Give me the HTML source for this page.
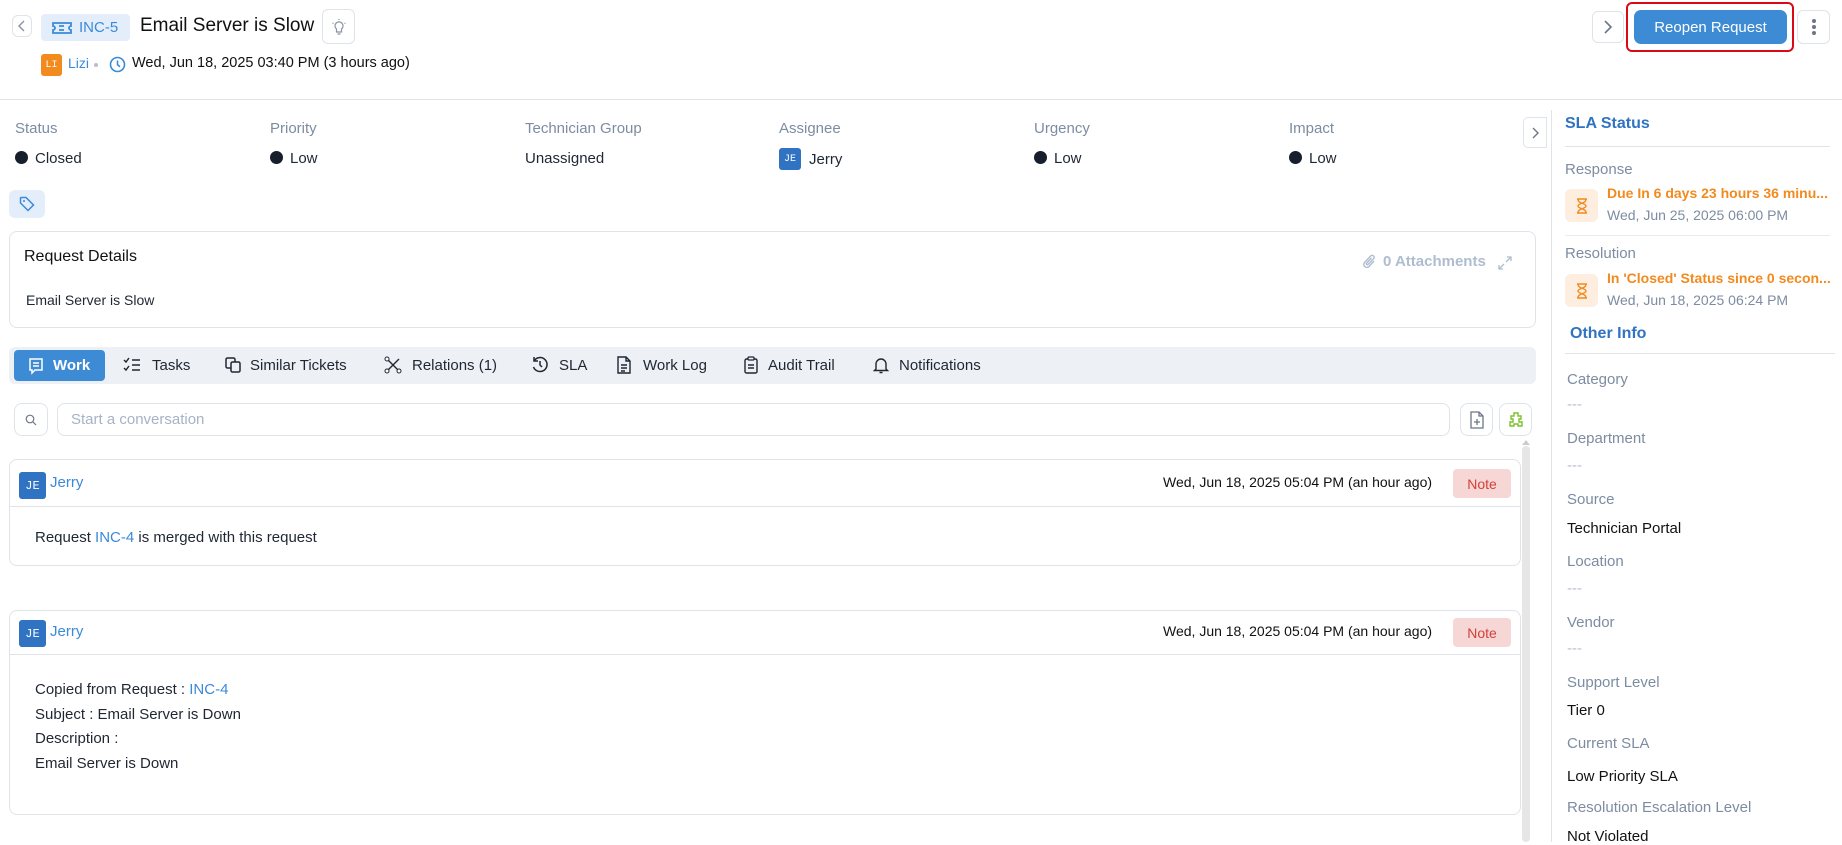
<!DOCTYPE html>
<html><head><meta charset="utf-8"><style>
*{box-sizing:border-box;margin:0;padding:0}
body{width:1842px;height:842px;overflow:hidden;background:#fff;font-family:"Liberation Sans",sans-serif;color:#1f2733;font-size:15px;position:relative}
.a{position:absolute}
.lbl{color:#7d8ca1;font-size:15px}
.btn{position:absolute;border:1px solid #dfe4ea;border-radius:6px;background:#fff;display:flex;align-items:center;justify-content:center}
.dot{display:inline-block;width:13px;height:13px;border-radius:50%;background:#161f2b;vertical-align:-1px;margin-right:7px}
.blue{color:#3b8ad9}
.card{position:absolute;border:1px solid #dfe4ea;border-radius:8px;background:#fff}
.av{display:inline-flex;align-items:center;justify-content:center;color:#fff;font-size:10px;border-radius:3px;font-family:"Liberation Mono",monospace}
.tab{position:absolute;top:357px;font-size:15px;color:#1f2733}
.note{position:absolute;left:1444px;width:58px;height:29px;background:#f6d7d5;color:#d2413a;border-radius:4px;font-size:14px;display:flex;align-items:center;justify-content:center}
.ri{position:absolute;left:1567px;font-size:15px}
</style></head><body>

<div class="btn" style="left:12px;top:15px;width:20px;height:22px"><svg width="10" height="12" viewBox="0 0 10 12"><path d="M7 1L2 6l5 5" stroke="#8793a3" fill="none" stroke-width="1.4"/></svg></div>
<div class="a" style="left:41px;top:14px;width:89px;height:27px;background:#e4eefa;border-radius:4px;color:#3b8ad9;font-size:15px;display:flex;align-items:center;padding-left:10px">
<svg width="22" height="14" viewBox="0 0 22 14" style="margin-right:6px"><path d="M2 2h18v3a2 2 0 000 4v3H2V9a2 2 0 000-4z M8 5h5M8 9h5" stroke="#3b8ad9" fill="none" stroke-width="1.8"/></svg>INC-5</div>
<div class="a" style="left:140px;top:15px;font-size:19px;color:#111">Email Server is Slow</div>
<div class="btn" style="left:322px;top:9px;width:33px;height:35px"><svg width="16" height="18" viewBox="0 0 16 18"><path d="M5.5 11a4 4 0 115 0v3h-5z M6.5 16h3 M8 1v1 M1.5 5l1 .5 M14.5 5l-1 .5" stroke="#8793a3" fill="none" stroke-width="1.2"/></svg></div>
<div class="av a" style="left:41px;top:54px;width:21px;height:22px;background:#f28a1e">LI</div>
<div class="a blue" style="left:68px;top:55px;font-size:14px">Lizi</div>
<div class="a" style="left:94px;top:63px;width:4px;height:4px;border-radius:50%;background:#b7c0cc"></div>
<svg class="a" style="left:109px;top:56px" width="17" height="17" viewBox="0 0 17 17"><circle cx="8.5" cy="8.5" r="7" stroke="#3b8ad9" fill="none" stroke-width="1.6"/><path d="M8.5 4.5v4.3l2.5 2" stroke="#3b8ad9" fill="none" stroke-width="1.6"/></svg>
<div class="a" style="left:132px;top:55px;font-size:14.5px;color:#111">Wed, Jun 18, 2025 03:40 PM (3 hours ago)</div>

<div class="btn" style="left:1592px;top:11px;width:32px;height:32px"><svg width="10" height="14" viewBox="0 0 10 14"><path d="M2 1l6 6-6 6" stroke="#6c7686" fill="none" stroke-width="1.6"/></svg></div>
<div class="a" style="left:1626px;top:2px;width:168px;height:50px;border:2.5px solid #d90a16;border-radius:6px"></div>
<div class="a" style="left:1634px;top:10px;width:153px;height:34px;background:#3d8ad5;border-radius:7px;color:#fff;font-size:15px;display:flex;align-items:center;justify-content:center">Reopen Request</div>
<div class="btn" style="left:1797px;top:10px;width:33px;height:34px"><svg width="4" height="18" viewBox="0 0 4 18"><circle cx="2" cy="3" r="2" fill="#6c7686"/><circle cx="2" cy="9" r="2" fill="#6c7686"/><circle cx="2" cy="15" r="2" fill="#6c7686"/></svg></div>
<div class="a" style="left:0;top:99px;width:1842px;height:1px;background:#e0e4ea"></div>

<div class="a lbl" style="left:15px;top:120px">Status</div><div class="a" style="left:15px;top:150px"><span class="dot"></span>Closed</div>
<div class="a lbl" style="left:270px;top:120px">Priority</div><div class="a" style="left:270px;top:150px"><span class="dot"></span>Low</div>
<div class="a lbl" style="left:525px;top:120px">Technician Group</div><div class="a" style="left:525px;top:150px">Unassigned</div>
<div class="a lbl" style="left:779px;top:120px">Assignee</div><div class="a" style="left:779px;top:148px;display:flex;align-items:center"><span class="av" style="width:22px;height:22px;background:#2f73c2;margin-right:8px">JE</span>Jerry</div>
<div class="a lbl" style="left:1034px;top:120px">Urgency</div><div class="a" style="left:1034px;top:150px"><span class="dot"></span>Low</div>
<div class="a lbl" style="left:1289px;top:120px">Impact</div><div class="a" style="left:1289px;top:150px"><span class="dot"></span>Low</div>
<div class="btn" style="left:1523px;top:117px;width:24px;height:31px;border-radius:5px 0 0 5px"><svg width="8" height="12" viewBox="0 0 8 12"><path d="M2 1l5 5-5 5" stroke="#6c7686" fill="none" stroke-width="1.4"/></svg></div>
<div class="a" style="left:9px;top:190px;width:36px;height:28px;background:#e4eefa;border-radius:6px;display:flex;align-items:center;justify-content:center"><svg width="16" height="16" viewBox="0 0 16 16"><path d="M1.5 2v5l7.5 7.5 5.5-5.5L7 1.5H2z" stroke="#3b8ad9" fill="none" stroke-width="1.5"/><circle cx="5" cy="5" r="1" fill="#3b8ad9"/></svg></div>

<div class="card" style="left:9px;top:231px;width:1527px;height:97px"></div>
<div class="a" style="left:24px;top:248px;font-size:16px;color:#111">Request Details</div>
<svg class="a" style="left:1362px;top:254px" width="15" height="16" viewBox="0 0 15 16"><path d="M12 7l-5 5.5a3 3 0 01-4.3-4.2l6-6.3a2 2 0 012.9 2.8L6 10.5a1 1 0 01-1.4-1.4L9.5 4" stroke="#aebdcf" fill="none" stroke-width="1.4"/></svg>
<div class="a" style="left:1383px;top:253px;color:#aebdcf;font-size:15px;font-weight:bold">0 Attachments</div>
<svg class="a" style="left:1498px;top:256px" width="14" height="14" viewBox="0 0 14 14"><path d="M8 6l5-5M9 1h4v4M6 8l-5 5M1 9v4h4" stroke="#aebdcf" fill="none" stroke-width="1.3"/></svg>
<div class="a" style="left:26px;top:292px;font-size:14px">Email Server is Slow</div>

<div class="a" style="left:9px;top:347px;width:1527px;height:37px;background:#edf0f4;border-radius:6px"></div>
<div class="a" style="left:14px;top:350px;width:91px;height:31px;background:#3d8ad5;border-radius:4px;color:#fff;font-weight:bold;display:flex;align-items:center;padding-left:13px;font-size:15px">
<svg width="18" height="18" viewBox="0 0 18 18" style="margin-right:8px"><path d="M3 2h12v11H8l-3 3v-3H3z M6 6h6M6 9h6" stroke="#fff" fill="none" stroke-width="1.5"/></svg>Work</div>
<svg class="a" style="left:123px;top:357px" width="18" height="16" viewBox="0 0 18 16"><path d="M1 3l2 2 3-4M1 11l2 2 3-4M9 3h8M9 8h8M9 13h8" stroke="#1f2733" fill="none" stroke-width="1.4"/></svg><div class="tab" style="left:152px">Tasks</div>
<svg class="a" style="left:224px;top:356px" width="18" height="18" viewBox="0 0 18 18"><rect x="2" y="2" width="9" height="10" rx="1.5" stroke="#1f2733" fill="none" stroke-width="1.5"/><rect x="7" y="6" width="9" height="10" rx="1.5" stroke="#1f2733" fill="#edf0f4" stroke-width="1.5"/></svg><div class="tab" style="left:250px">Similar Tickets</div>
<svg class="a" style="left:384px;top:356px" width="18" height="18" viewBox="0 0 18 18"><path d="M3 3l12 12M15 3L3 15M9 9" stroke="#1f2733" fill="none" stroke-width="1.4"/><circle cx="3" cy="3" r="2" fill="#fff" stroke="#1f2733"/><circle cx="15" cy="15" r="2" fill="#fff" stroke="#1f2733"/><circle cx="3" cy="15" r="2" fill="#fff" stroke="#1f2733"/></svg><div class="tab" style="left:412px">Relations (1)</div>
<svg class="a" style="left:531px;top:356px" width="18" height="18" viewBox="0 0 18 18"><path d="M3 5a7 7 0 11-.5 6M3 1v4h4M9 5v4l2 2" stroke="#1f2733" fill="none" stroke-width="1.5"/></svg><div class="tab" style="left:559px">SLA</div>
<svg class="a" style="left:616px;top:356px" width="16" height="18" viewBox="0 0 16 18"><path d="M2 1h8l4 4v12H2z M10 1v4h4 M5 9h6M5 12h6M5 15h4" stroke="#1f2733" fill="none" stroke-width="1.4"/></svg><div class="tab" style="left:643px">Work Log</div>
<svg class="a" style="left:743px;top:356px" width="16" height="18" viewBox="0 0 16 18"><rect x="2" y="3" width="12" height="14" rx="1.5" stroke="#1f2733" fill="none" stroke-width="1.4"/><rect x="5" y="1" width="6" height="3" rx="1" stroke="#1f2733" fill="#edf0f4" stroke-width="1.3"/><path d="M5 9h6M5 12h6" stroke="#1f2733" stroke-width="1.4"/></svg><div class="tab" style="left:768px">Audit Trail</div>
<svg class="a" style="left:873px;top:356px" width="16" height="18" viewBox="0 0 16 18"><path d="M3 13V8a5 5 0 0110 0v5l1.5 1.5h-13z M6.5 16.5h3" stroke="#1f2733" fill="none" stroke-width="1.4"/></svg><div class="tab" style="left:899px">Notifications</div>

<div class="btn" style="left:14px;top:403px;width:34px;height:33px;border-radius:8px"><svg width="12" height="12" viewBox="0 0 12 12"><circle cx="5" cy="5" r="3.8" stroke="#6c7686" fill="none" stroke-width="1.2"/><path d="M8 8l3 3" stroke="#6c7686" stroke-width="1.2"/></svg></div>
<div class="a" style="left:57px;top:403px;width:1393px;height:33px;border:1px solid #dfe4ea;border-radius:8px;color:#a6b3c4;font-size:15px;padding:7px 13px">Start a conversation</div>
<div class="btn" style="left:1460px;top:403px;width:33px;height:33px;border-radius:8px"><svg width="14" height="18" viewBox="0 0 14 18"><path d="M1 1h8l4 4v12H1z M9 1v4h4 M4 11h6M7 8v6" stroke="#6c7686" fill="none" stroke-width="1.3"/></svg></div>
<div class="btn" style="left:1499px;top:403px;width:33px;height:33px;border-radius:8px"><svg width="18" height="18" viewBox="0 0 18 18"><path d="M7 2h4v3h3v3h-2v3h3v4h-4v-2H7v2H3v-4h3V8H4V5h3z" stroke="#7cc12a" fill="none" stroke-width="1.4"/></svg></div>

<div class="a" style="left:1522px;top:446px;width:8px;height:396px;background:#e6e6e6;border-radius:4px"></div>
<div class="a" style="left:1522px;top:440px;width:0;height:0;border-left:4px solid transparent;border-right:4px solid transparent;border-bottom:5px solid #ccc"></div>

<div class="card" style="left:9px;top:459px;width:1512px;height:107px"></div>
<div class="a" style="left:9px;top:506px;width:1512px;height:1px;background:#e0e4ea"></div>
<div class="av a" style="left:19px;top:472px;width:27px;height:27px;background:#2f73c2;font-size:12px">JE</div>
<div class="a blue" style="left:50px;top:474px;font-size:15px">Jerry</div>
<div class="a" style="left:1163px;top:474px;font-size:14px;color:#111">Wed, Jun 18, 2025 05:04 PM (an hour ago)</div>
<div class="note" style="top:469px;left:1453px">Note</div>
<div class="a" style="left:35px;top:529px;font-size:15px">Request <span class="blue">INC-4</span> is merged with this request</div>

<div class="card" style="left:9px;top:610px;width:1512px;height:205px"></div>
<div class="a" style="left:9px;top:654px;width:1512px;height:1px;background:#e0e4ea"></div>
<div class="av a" style="left:19px;top:620px;width:27px;height:27px;background:#2f73c2;font-size:12px">JE</div>
<div class="a blue" style="left:50px;top:623px;font-size:15px">Jerry</div>
<div class="a" style="left:1163px;top:623px;font-size:14px;color:#111">Wed, Jun 18, 2025 05:04 PM (an hour ago)</div>
<div class="note" style="top:618px;left:1453px">Note</div>
<div class="a" style="left:35px;top:678px;font-size:15px;line-height:24.7px">Copied from Request : <span class="blue">INC-4</span><br>Subject : Email Server is Down<br>Description :<br>Email Server is Down</div>

<div class="a" style="left:1551px;top:110px;width:1px;height:732px;background:#e0e4ea"></div>
<div class="a" style="left:1565px;top:115px;color:#2f73c2;font-size:16px;font-weight:bold">SLA Status</div>
<div class="a" style="left:1565px;top:146px;width:265px;height:1px;background:#e0e4ea"></div>
<div class="ri lbl" style="left:1565px;top:161px">Response</div>
<div class="a" style="left:1565px;top:189px;width:33px;height:33px;background:#fdeee0;border-radius:6px;display:flex;align-items:center;justify-content:center"><svg width="12" height="16" viewBox="0 0 12 16"><path d="M1 1h10M1 15h10M2 1c0 5 8 4 8 7s-8 2-8 7M10 1c0 5-8 4-8 7s8 2 8 7" stroke="#f28a1e" fill="none" stroke-width="1.4"/></svg></div>
<div class="a" style="left:1607px;top:185px;color:#f28a1e;font-size:14px;font-weight:bold;white-space:nowrap">Due In 6 days 23 hours 36 minu...</div>
<div class="a" style="left:1607px;top:207px;color:#7d8ca1;font-size:14px">Wed, Jun 25, 2025 06:00 PM</div>
<div class="a" style="left:1565px;top:235px;width:265px;height:1px;background:#e8ebef"></div>
<div class="ri lbl" style="left:1565px;top:245px">Resolution</div>
<div class="a" style="left:1565px;top:274px;width:33px;height:33px;background:#fdeee0;border-radius:6px;display:flex;align-items:center;justify-content:center"><svg width="12" height="16" viewBox="0 0 12 16"><path d="M1 1h10M1 15h10M2 1c0 5 8 4 8 7s-8 2-8 7M10 1c0 5-8 4-8 7s8 2 8 7" stroke="#f28a1e" fill="none" stroke-width="1.4"/></svg></div>
<div class="a" style="left:1607px;top:270px;color:#f28a1e;font-size:14px;font-weight:bold;white-space:nowrap">In 'Closed' Status since 0 secon...</div>
<div class="a" style="left:1607px;top:292px;color:#7d8ca1;font-size:14px">Wed, Jun 18, 2025 06:24 PM</div>
<div class="a" style="left:1570px;top:325px;color:#2f73c2;font-size:16px;font-weight:bold">Other Info</div>
<div class="a" style="left:1565px;top:353px;width:270px;height:1px;background:#e0e4ea"></div>
<div class="ri lbl" style="top:371px">Category</div><div class="ri" style="top:396px;color:#b7c0cc">---</div>
<div class="ri lbl" style="top:430px">Department</div><div class="ri" style="top:457px;color:#b7c0cc">---</div>
<div class="ri lbl" style="top:491px">Source</div><div class="ri" style="top:520px;color:#111">Technician Portal</div>
<div class="ri lbl" style="top:553px">Location</div><div class="ri" style="top:580px;color:#b7c0cc">---</div>
<div class="ri lbl" style="top:614px">Vendor</div><div class="ri" style="top:640px;color:#b7c0cc">---</div>
<div class="ri lbl" style="top:674px">Support Level</div><div class="ri" style="top:702px;color:#111">Tier 0</div>
<div class="ri lbl" style="top:735px">Current SLA</div><div class="ri" style="top:768px;color:#111">Low Priority SLA</div>
<div class="ri lbl" style="top:799px">Resolution Escalation Level</div><div class="ri" style="top:828px;color:#111">Not Violated</div>
</body></html>
